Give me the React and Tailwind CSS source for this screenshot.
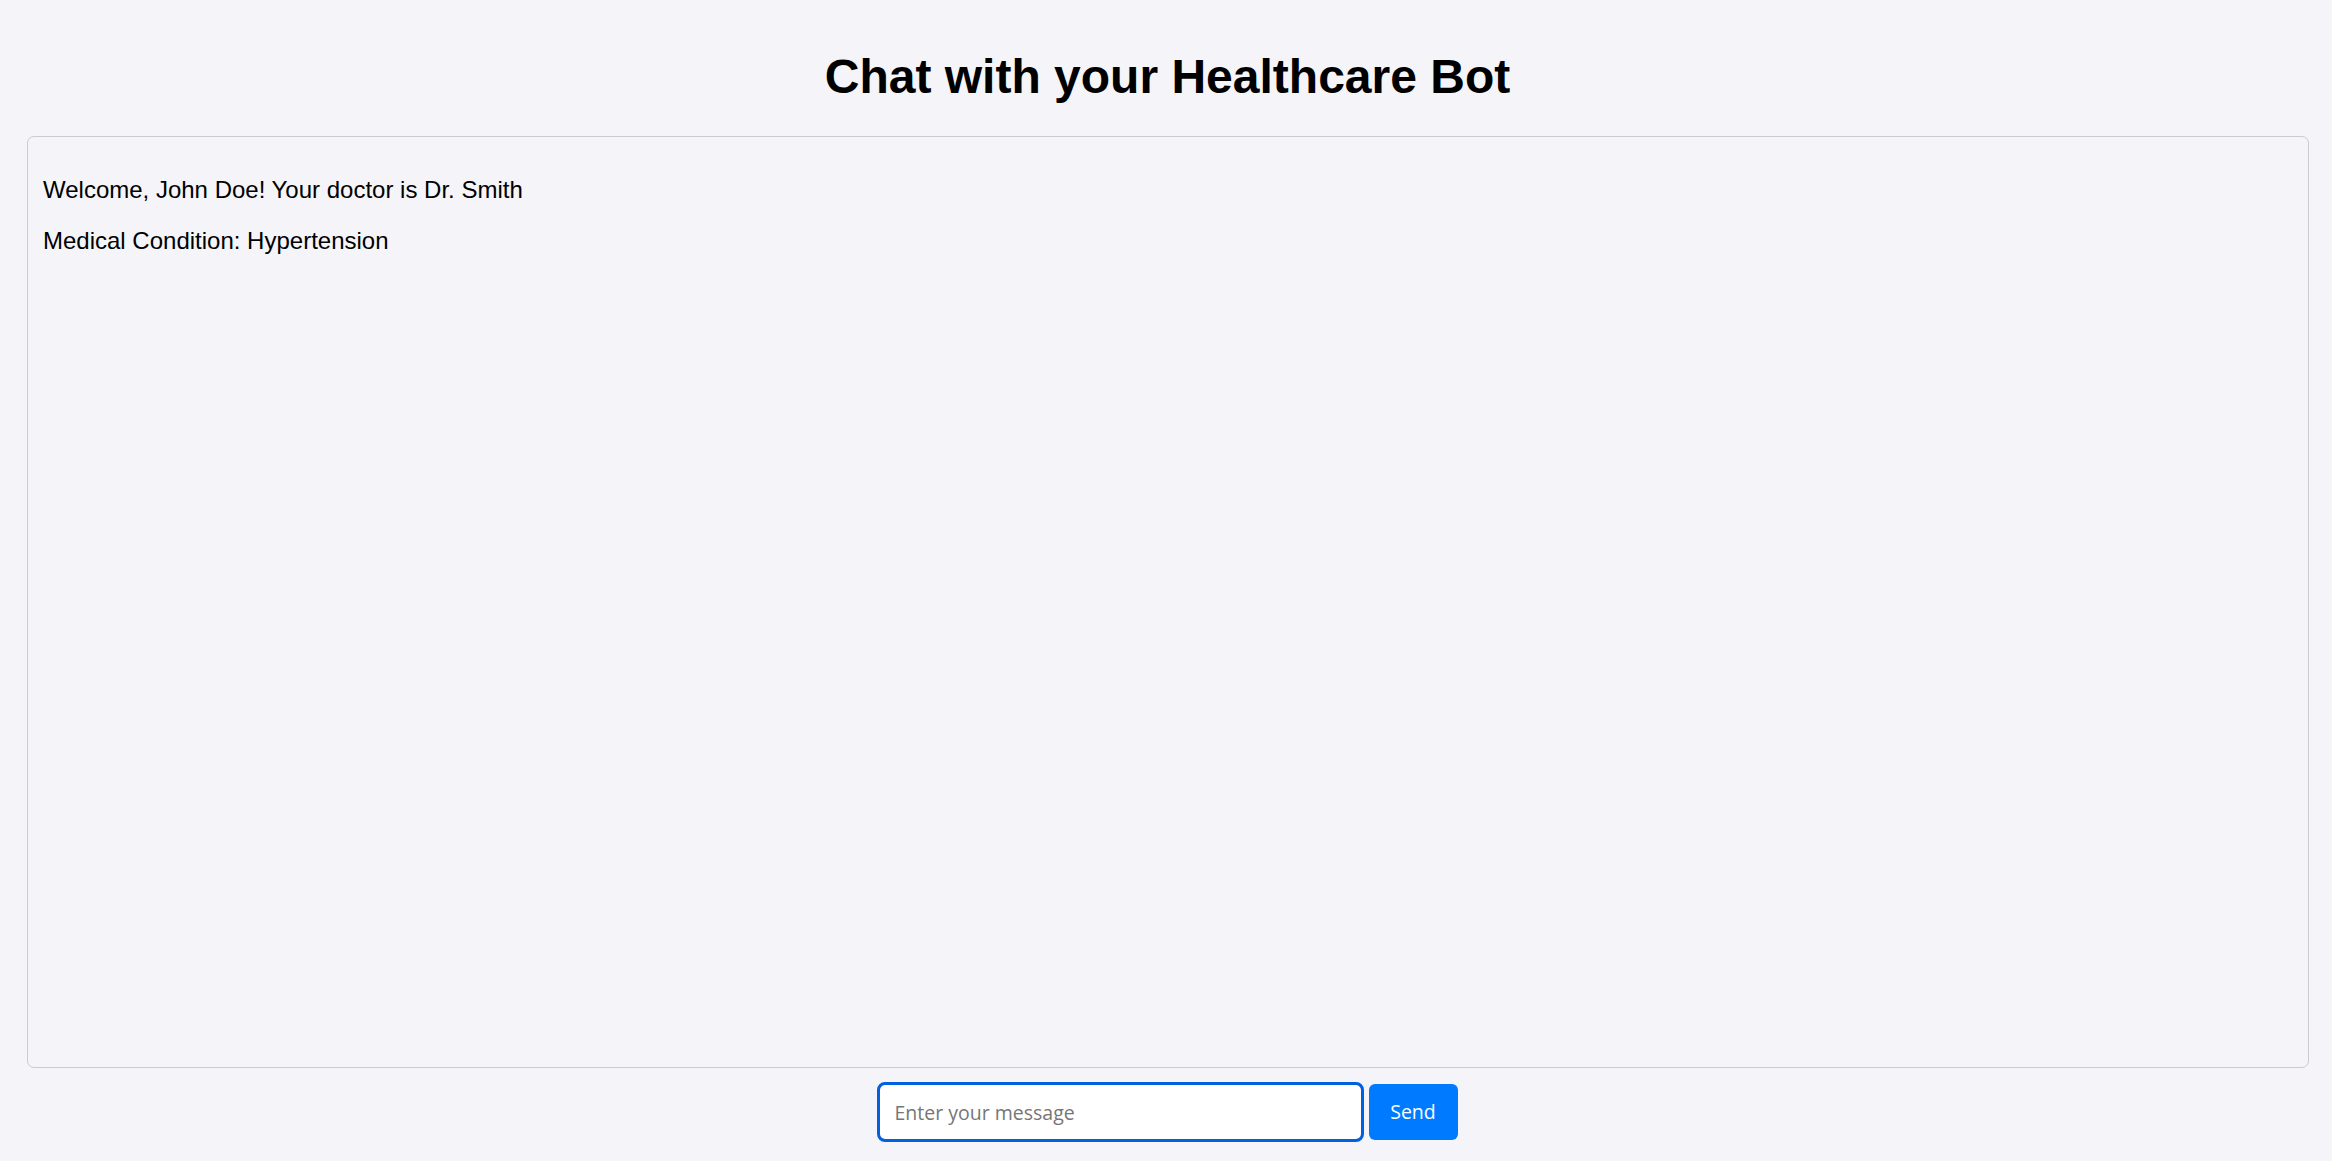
export default function App() {
  return (
    <div className="min-h-[1161px] w-[2332px] bg-[#f4f4f9] font-['Liberation_Sans',Arial,sans-serif] text-black overflow-hidden">
      <h1 className="pt-[49px] mb-[32px] pl-[3px] text-center text-[48px] leading-[55px] font-bold">
        Chat with your Healthcare Bot
      </h1>
      <div className="ml-[27px] w-[2282px] h-[932px] border border-[#cccccc] rounded-[7px] bg-[#f4f4f9] px-[15px] py-[15px] text-[24px] leading-[27px]">
        <p className="my-[24px]">Welcome, John Doe! Your doctor is Dr. Smith</p>
        <p className="my-[24px]">Medical Condition: Hypertension</p>
      </div>
      <div className="mt-[16px] pl-[4px] flex justify-center gap-[7px]">
        <input
          type="text"
          placeholder="Enter your message"
          className="w-[483px] h-[56px] bg-white border border-[#c8c8c8] rounded-[6px] px-[15px] text-[19.5px] font-['Open_Sans',sans-serif] placeholder:text-[#767676] outline-solid outline-[3px] outline-offset-[-1px] outline-[#0060df]"
        />
        <button className="w-[89px] h-[56px] bg-[#007bff] text-white rounded-[6px] text-[19.5px] font-['Open_Sans',sans-serif]">
          Send
        </button>
      </div>
    </div>
  );
}
